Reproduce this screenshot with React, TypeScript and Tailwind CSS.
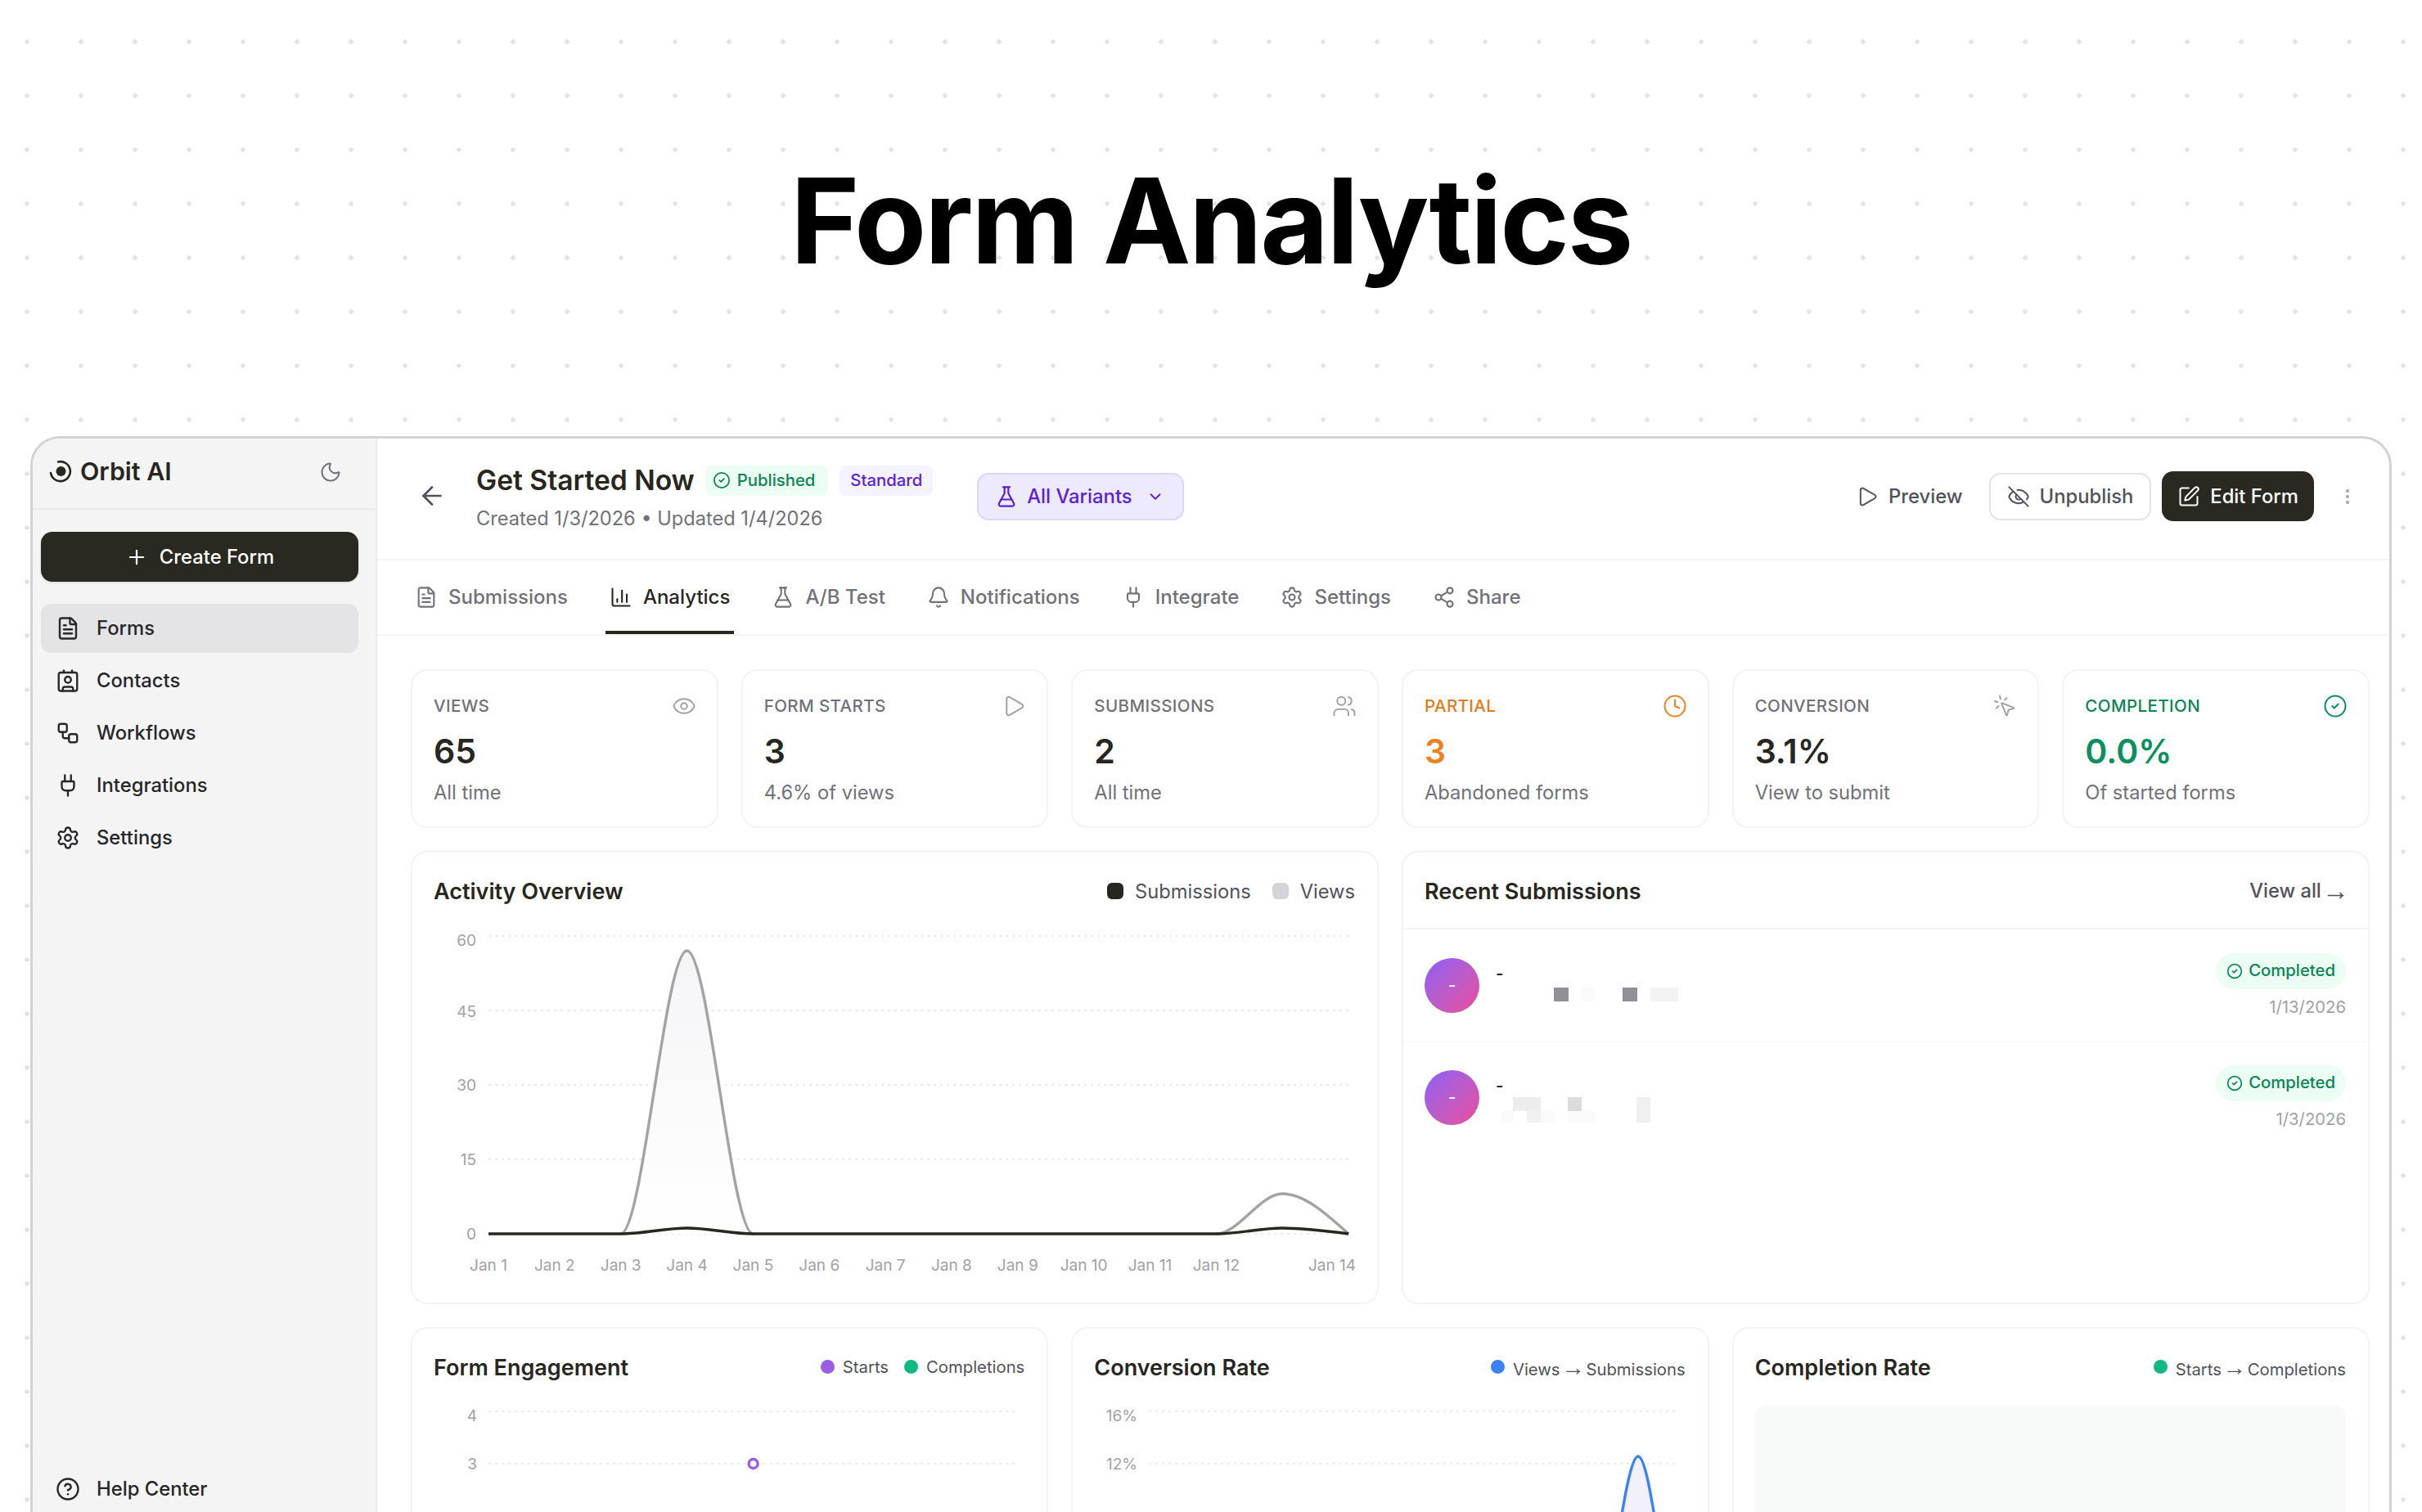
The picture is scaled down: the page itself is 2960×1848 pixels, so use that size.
import React from "react";
import {
  ArrowLeft, Bell, ChevronDown, CircleCheck, CircleHelp, Clock, Contact, Eye, EyeOff, EllipsisVertical,
  FileText, FlaskConical, MousePointerClick, Moon, Play, Plug, Plus, Settings, Share2, SquarePen, Users, Workflow, ChartColumn,
} from "lucide-react";

const FONT = "font-['Inter','Liberation_Sans',sans-serif]";

function Arrow() {
  return <span className="mx-[-4px] font-['Liberation_Sans',sans-serif] text-[1.4em] font-normal leading-none">→</span>;
}

function Nav({ icon: I, label, active }: { icon: any; label: string; active?: boolean }) {
  return (
    <div className={`flex h-[60px] items-center gap-[20px] rounded-[12px] pl-[18px] text-[23.8px] font-medium leading-none text-[#27272a] ${active ? "bg-[#e4e4e7]" : ""}`}>
      <I size={30} strokeWidth={1.9} className="shrink-0 text-[#27272a]" />
      <span>{label}</span>
    </div>
  );
}

function Tab({ icon: I, label, active }: { icon: any; label: string; active?: boolean }) {
  return (
    <div className={`flex h-[92px] items-center gap-[13px] border-b-[4px] pl-[5px] pr-[5px] pt-[5px] text-[24px] font-medium leading-none ${active ? "border-[#27261f] text-[#27261f]" : "border-transparent text-[#71717a]"}`}>
      <I size={28} strokeWidth={1.8} className={`shrink-0 ${active ? "text-[#27261f]" : "text-[#71717a]"}`} />
      <span>{label}</span>
    </div>
  );
}

function Stat({ label, value, sub, icon: I, tone }: { label: string; value: string; sub: string; icon: any; tone?: "orange" | "green" }) {
  const lab = tone === "orange" ? "text-[#e07b1c]" : tone === "green" ? "text-[#0a8554]" : "text-[#71717a]";
  const val = tone === "orange" ? "text-[#e8831f]" : tone === "green" ? "text-[#0a8f5e]" : "text-[#27261f]";
  const ic = tone === "orange" ? "text-[#e8831f]" : tone === "green" ? "text-[#0a8f5e]" : "text-[#a1a1aa]";
  return (
    <div className="flex h-[194px] flex-col rounded-[20px] border-2 border-[#f4f4f5] bg-white pl-[26px] pr-[27px] pt-[29px]">
      <div className={`flex h-[28px] items-center justify-between text-[20.5px] font-medium leading-none tracking-[0.4px] ${lab}`}>
        <span>{label}</span>
        <I size={30} strokeWidth={1.6} className={`-mr-[2px] ${ic}`} />
      </div>
      <div className={`mt-[16px] text-[41px] font-semibold leading-[50px] ${val}`}>{value}</div>
      <div className="mt-[11px] text-[23.7px] leading-[30px] text-[#71717a]">{sub}</div>
    </div>
  );
}

function Card({ children, className = "" }: { children: React.ReactNode; className?: string }) {
  return <div className={`rounded-[20px] border-2 border-[#f4f4f5] bg-white ${className}`}>{children}</div>;
}

function Legend({ dot, children }: { dot: string; children: React.ReactNode }) {
  return (
    <div className="flex items-center gap-[10px] text-[20.3px] leading-none text-[#52525b]">
      <span className={`h-[17px] w-[17px] rounded-full ${dot}`} />
      <span>{children}</span>
    </div>
  );
}

const X0 = 93;
const DX = 80.85;
const px = (i: number) => X0 + DX * i;

function ActivityChart() {
  const Y0 = 372;
  const rows = [["60", 8, 12], ["45", 99, 8], ["30", 190, 7], ["15", 281, 7], ["0", 372, 7]] as const;
  const days = ["Jan 1", "Jan 2", "Jan 3", "Jan 4", "Jan 5", "Jan 6", "Jan 7", "Jan 8", "Jan 9", "Jan 10", "Jan 11", "Jan 12"];
  const k = DX / 3;
  const seg = (i: number, y: number, y2: number) => `C ${px(i) + k} ${y} ${px(i + 1) - k} ${y2} ${px(i + 1)} ${y2}`;
  const pk = Y0 - 346;
  const small = Y0 - 49;
  const views = `M ${px(2)} ${Y0} ${seg(2, Y0, pk)} ${seg(3, pk, Y0)}`;
  const views2 = `M ${px(11)} ${Y0} ${seg(11, Y0, small)} C ${px(12) + k} ${small} ${px(13) - k} ${Y0 - 24} ${px(13)} ${Y0}`;
  const sub1 = Y0 - 7;
  const subs = `M ${px(0)} ${Y0} L ${px(2)} ${Y0} ${seg(2, Y0, sub1)} ${seg(3, sub1, Y0)} L ${px(11)} ${Y0} ${seg(11, Y0, sub1)} C ${px(12) + k} ${sub1} ${px(13) - k} ${Y0 - 3.5} ${px(13)} ${Y0}`;
  return (
    <svg width="1181" height="458" viewBox="0 0 1181 458" className="block">
      <defs>
        <linearGradient id="vf" x1="0" y1="0" x2="0" y2="1">
          <stop offset="0" stopColor="#f5f5f7" />
          <stop offset="1" stopColor="#ffffff" />
        </linearGradient>
      </defs>
      {rows.map(([t, y, o]) => (
        <g key={t}>
          <line x1={X0} x2={px(13)} y1={y} y2={y} stroke="#ececee" strokeWidth="2" strokeDasharray="3 5" />
          <text x={X0 - 15} y={y + o} textAnchor="end" fontSize="19" fill="#a1a1aa" fontFamily="Inter">{t}</text>
        </g>
      ))}
      <path d={`${views} Z`} fill="url(#vf)" />
      <path d={views} fill="none" stroke="#a3a3a3" strokeWidth="3.4" />
      <path d={views2} fill="none" stroke="#a3a3a3" strokeWidth="3.4" />
      <path d={subs} fill="none" stroke="#27261f" strokeWidth="3.4" />
      {days.map((d, i) => (
        <text key={d} x={px(i)} y={417} textAnchor="middle" fontSize="19" fill="#a1a1aa" fontFamily="Inter">{d}</text>
      ))}
      <text x={px(13) + 9} y={417} textAnchor="end" fontSize="19" fill="#a1a1aa" fontFamily="Inter">Jan 14</text>
    </svg>
  );
}

function EngagementChart() {
  return (
    <svg width="777" height="150" viewBox="0 0 777 150" className="block">
      {([["4", 7, 12], ["3", 71, 7], ["2", 135, 9]] as const).map(([t, y, o]) => (
        <g key={t}>
          <line x1="93" x2="739" y1={y} y2={y} stroke="#ececee" strokeWidth="2" strokeDasharray="3 5" />
          <text x="79" y={y + o} textAnchor="end" fontSize="19" fill="#a1a1aa" fontFamily="Inter">{t}</text>
        </g>
      ))}
      <circle cx="416.6" cy="71" r="5.5" fill="#fff" stroke="#9b5de5" strokeWidth="3.4" />
    </svg>
  );
}

function ConversionChart() {
  const a = 641;
  const b = 691;
  const c = 740;
  const y0 = 263;
  const p = 62;
  const k = 16.5;
  const d = `M ${a} ${y0} C ${a + k} ${y0} ${b - k} ${p} ${b} ${p} C ${b + k} ${p} ${c - k} ${y0} ${c} ${y0}`;
  return (
    <svg width="777" height="150" viewBox="0 0 777 150" className="block">
      {([["16%", 7, 12], ["12%", 71, 7], ["8%", 135, 9]] as const).map(([t, y, o]) => (
        <g key={t}>
          <line x1="93" x2="740" y1={y} y2={y} stroke="#ececee" strokeWidth="2" strokeDasharray="3 5" />
          <text x="79" y={y + o} textAnchor="end" fontSize="19" fill="#a1a1aa" fontFamily="Inter">{t}</text>
        </g>
      ))}
      <path d={d} fill="#f1f0fb" stroke="#3b82f6" strokeWidth="3.4" />
    </svg>
  );
}

function Mosaic({ rects }: { rects: [number, number, number, number, string][] }) {
  return (
    <svg width="240" height="34" viewBox="0 0 240 34" className="block">
      {rects.map(([x, y, w, h, c], i) => <rect key={i} x={x} y={y} width={w} height={h} fill={c} />)}
    </svg>
  );
}

function Row({ date, rects, first }: { date: string; rects: [number, number, number, number, string][]; first?: boolean }) {
  return (
    <div className={`flex h-[136px] items-center justify-between pl-[26px] pr-[27px] ${first ? "" : "border-t-2 border-[#fafafa]"}`}>
      <div className="flex items-center gap-[20px]">
        <div className="flex h-[67px] w-[67px] items-center justify-center rounded-full bg-gradient-to-br from-[#8b5cf6] to-[#ec4899] text-[20px] font-medium text-white">-</div>
        <div className="flex flex-col">
          <div className="h-[30px] pt-[3px] text-[20.5px] font-medium leading-[30px] text-[#27261f]">-</div>
          <Mosaic rects={rects} />
        </div>
      </div>
      <div className="flex flex-col items-end gap-[9px]">
        <div className="flex h-[44px] items-center gap-[7px] rounded-full bg-[#ecfdf3] px-[13px] text-[20.3px] font-medium leading-none text-[#0a8554]">
          <CircleCheck size={20} strokeWidth={2} />
          <span>Completed</span>
        </div>
        <div className="text-[20.3px] leading-[26px] text-[#a1a1aa]">{date}</div>
      </div>
    </div>
  );
}

export default function App() {
  return (
    <div className={`${FONT} h-[1848px] w-[2960px] overflow-hidden bg-white bg-[radial-gradient(circle,#e4e4e7_2.5px,transparent_3px)] bg-[length:66px_66px] bg-[position:0px_18px]`}>
      <div className="flex h-[533px] justify-center pt-[185px]">
        <h1 className="text-[144px] font-bold leading-[170px] tracking-[-2.4px] text-black">Form Analytics</h1>
      </div>

      <div className="mx-[37px] flex h-[1400px] overflow-hidden rounded-t-[36px] border-[3px] border-[#d0d4d4] bg-white">
        {/* Sidebar */}
        <aside className="flex h-[1312px] w-[421px] shrink-0 flex-col border-r-2 border-[#ececee] bg-[#f4f4f5]">
          <div className="flex h-[87px] shrink-0 items-center justify-between border-b-2 border-[#ececee] pb-[4px] pl-[20px] pr-[41px]">
            <div className="flex items-center gap-[9px]">
              <svg width="29" height="29" viewBox="0 0 29 29" fill="none">
                <path d="M11 2.5 A 12 12 0 1 1 2 16" stroke="#27261f" strokeWidth="2.6" strokeLinecap="round" />
                <circle cx="14.5" cy="14" r="6" fill="#27261f" />
              </svg>
              <span className="text-[30.4px] font-semibold leading-none text-[#27261f]">Orbit AI</span>
            </div>
            <Moon size={28} strokeWidth={1.7} className="text-[#71717a]" />
          </div>
          <div className="flex flex-1 flex-col pl-[10px] pr-[21px] pt-[27px]">
            <button className="flex h-[61px] shrink-0 items-center justify-center gap-[14px] rounded-[14px] bg-[#2a2921] text-[23.8px] font-medium text-white shadow-sm">
              <Plus size={28} strokeWidth={1.9} />
              <span>Create Form</span>
            </button>
            <nav className="mt-[27px] flex flex-col gap-[4px]">
              <Nav icon={FileText} label="Forms" active />
              <Nav icon={Contact} label="Contacts" />
              <Nav icon={Workflow} label="Workflows" />
              <Nav icon={Plug} label="Integrations" />
              <Nav icon={Settings} label="Settings" />
            </nav>
            <div className="mt-auto -mb-[2px]">
              <Nav icon={CircleHelp} label="Help Center" />
            </div>
          </div>
        </aside>

        {/* Main */}
        <main className="min-w-0 flex-1">
          <header className="flex h-[149px] items-center border-b-2 border-[#f4f4f5] pl-[49px] pr-[39px]">
            <ArrowLeft size={36} strokeWidth={1.8} className="mt-[-7px] shrink-0 text-[#52525b]" />
            <div className="ml-[36px] flex flex-col pb-[3px]">
              <div className="flex items-center">
                <span className="text-[33.6px] font-semibold leading-[40px] text-[#27261f]">Get Started Now</span>
                <span className="ml-[13px] flex h-[37px] items-center gap-[8px] rounded-[8px] bg-[#ecfdf3] pl-[9px] pr-[16px] text-[20.3px] font-medium leading-none text-[#0a8554]">
                  <CircleCheck size={22} strokeWidth={1.9} />Published
                </span>
                <span className="ml-[14px] flex h-[37px] items-center rounded-[8px] bg-[#f5f3ff] px-[13px] text-[20.3px] font-medium leading-none text-[#5b21d6]">Standard</span>
              </div>
              <div className="mt-[12px] text-[23.6px] leading-[30px] text-[#71717a]">Created 1/3/2026 • Updated 1/4/2026</div>
            </div>
            <button className="ml-[54px] mb-[6px] flex h-[58px] items-center gap-[11px] rounded-[14px] border-2 border-[#ddd6fe] bg-[#ede9fe] pl-[20px] pr-[22px] text-[23.8px] font-medium leading-none text-[#5b21d6]">
              <FlaskConical size={28} strokeWidth={1.9} />
              <span>All Variants</span>
              <ChevronDown size={22} strokeWidth={2} className="ml-[6px]" />
            </button>
            <div className="mb-[6px] ml-auto flex items-center">
              <button className="flex h-[58px] items-center gap-[12px] px-[12px] text-[23.8px] font-medium leading-none text-[#52525b]">
                <Play size={28} strokeWidth={1.7} />
                <span>Preview</span>
              </button>
              <button className="ml-[20px] flex h-[58px] items-center gap-[12px] rounded-[14px] border-2 border-[#e4e4e7] bg-white px-[20px] text-[23.8px] font-medium leading-none text-[#52525b]">
                <EyeOff size={28} strokeWidth={1.7} />
                <span>Unpublish</span>
              </button>
              <button className="ml-[13px] flex h-[61px] items-center gap-[12px] rounded-[14px] bg-[#2a2921] px-[19px] text-[23.8px] font-medium leading-none text-white">
                <SquarePen size={28} strokeWidth={1.7} />
                <span>Edit Form</span>
              </button>
              <EllipsisVertical size={24} strokeWidth={2} className="ml-[29px] text-[#a1a1aa]" />
            </div>
          </header>

          <div className="flex h-[92px] items-end gap-[41px] border-b-2 border-[#f4f4f5] pl-[41px]">
            <Tab icon={FileText} label="Submissions" />
            <Tab icon={ChartColumn} label="Analytics" active />
            <Tab icon={FlaskConical} label="A/B Test" />
            <Tab icon={Bell} label="Notifications" />
            <Tab icon={Plug} label="Integrate" />
            <Tab icon={Settings} label="Settings" />
            <Tab icon={Share2} label="Share" />
          </div>

          <div className="flex flex-col gap-[28px] pl-[41px] pr-[24px] pt-[41px]">
            <div className="grid grid-cols-6 gap-[28px]">
              <Stat label="VIEWS" value="65" sub="All time" icon={Eye} />
              <Stat label="FORM STARTS" value="3" sub="4.6% of views" icon={Play} />
              <Stat label="SUBMISSIONS" value="2" sub="All time" icon={Users} />
              <Stat label="PARTIAL" value="3" sub="Abandoned forms" icon={Clock} tone="orange" />
              <Stat label="CONVERSION" value="3.1%" sub="View to submit" icon={MousePointerClick} />
              <Stat label="COMPLETION" value="0.0%" sub="Of started forms" icon={CircleCheck} tone="green" />
            </div>

            <div className="grid grid-cols-2 gap-[28px]">
              <Card className="h-[554px]">
                <div className="flex h-[94px] items-center justify-between pl-[26px] pr-[27px] pt-[1px]">
                  <span className="text-[27px] font-semibold leading-none text-[#27261f]">Activity Overview</span>
                  <div className="flex items-center gap-[26px] text-[23.7px] leading-none text-[#52525b]">
                    <div className="flex items-center gap-[14px]"><span className="h-[20px] w-[20px] rounded-[6px] bg-[#27261f]" />Submissions</div>
                    <div className="flex items-center gap-[14px]"><span className="h-[20px] w-[20px] rounded-[6px] bg-[#d4d4d8]" />Views</div>
                  </div>
                </div>
                <ActivityChart />
              </Card>
              <Card className="h-[554px]">
                <div className="flex h-[94px] items-center justify-between border-b-2 border-[#f4f4f5] pl-[26px] pr-[27px] pt-[2px]">
                  <span className="text-[27px] font-semibold leading-none text-[#27261f]">Recent Submissions</span>
                  <span className="flex items-center gap-[5px] text-[23.7px] font-medium leading-none text-[#52525b]">View all <Arrow /></span>
                </div>
                <Row first date="1/13/2026" rects={[[71, 5, 18, 17, "#8f9197"], [105, 5, 16, 17, "#fafafa"], [155, 5, 18, 17, "#8f9197"], [189, 5, 34, 17, "#f3f3f3"]]} />
                <Row date="1/3/2026" rects={[[21, 2, 34, 17, "#ededed"], [88, 2, 17, 17, "#dcdcdc"], [172, 2, 17, 31, "#f0f0f0"], [6, 19, 16, 14, "#fafafa"], [38, 19, 17, 14, "#f1f1f1"], [55, 19, 17, 14, "#fafafa"], [88, 19, 34, 14, "#fafafa"]]} />
              </Card>
            </div>

            <div className="grid grid-cols-3 gap-[28px]">
              <Card className="h-[400px]">
                <div className="flex h-[94px] items-center justify-between pl-[26px] pr-[27px]">
                  <span className="text-[27px] font-semibold leading-none text-[#27261f]">Form Engagement</span>
                  <div className="flex items-center gap-[19px]">
                    <Legend dot="bg-[#9b5de5]">Starts</Legend>
                    <Legend dot="bg-[#10b981]">Completions</Legend>
                  </div>
                </div>
                <EngagementChart />
              </Card>
              <Card className="h-[400px]">
                <div className="flex h-[94px] items-center justify-between pl-[26px] pr-[27px]">
                  <span className="text-[27px] font-semibold leading-none text-[#27261f]">Conversion Rate</span>
                  <Legend dot="bg-[#3b82f6]">Views <Arrow /> Submissions</Legend>
                </div>
                <ConversionChart />
              </Card>
              <Card className="h-[400px]">
                <div className="flex h-[94px] items-center justify-between pl-[26px] pr-[27px]">
                  <span className="text-[27px] font-semibold leading-none text-[#27261f]">Completion Rate</span>
                  <Legend dot="bg-[#10b981]">Starts <Arrow /> Completions</Legend>
                </div>
                <div className="ml-[26px] mr-[27px] h-[280px] rounded-[14px] bg-[#f8f9f9]" />
              </Card>
            </div>
          </div>
        </main>
      </div>
    </div>
  );
}
